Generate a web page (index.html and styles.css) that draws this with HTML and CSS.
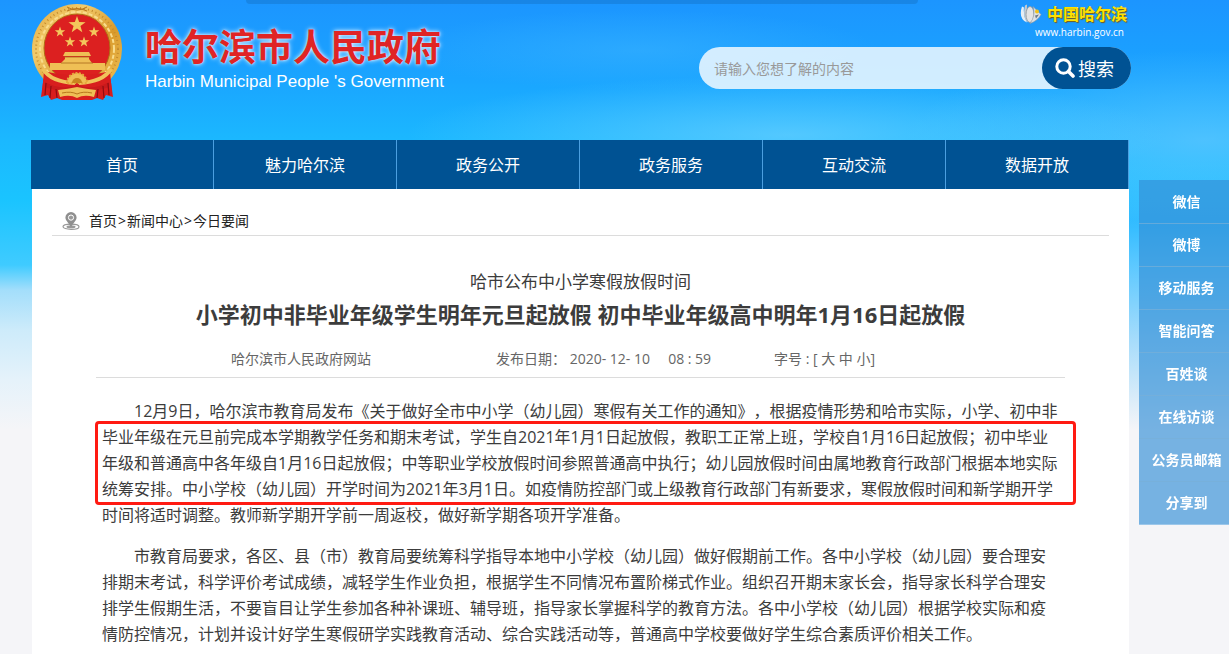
FILE: index.html
```
<!DOCTYPE html>
<html lang="zh-CN">
<head>
    <meta charset="UTF-8">
    <meta name="viewport" content="width=device-width, initial-scale=1.0">
    <title>哈尔滨市人民政府</title>
    <link rel="stylesheet" href="styles.css">
</head>
<body>
    <div class="top-tab"></div>

    <div class="page">
        <header class="header">
            <a class="brand" href="#">
                <svg class="emblem" viewBox="0 0 92 98" aria-hidden="true">
                    <defs>
                        <linearGradient id="gold" x1="0" y1="0" x2="1" y2="1">
                            <stop offset="0" stop-color="#e0a63a"/>
                            <stop offset="0.3" stop-color="#f2cb6c"/>
                            <stop offset="0.6" stop-color="#d99a2b"/>
                            <stop offset="1" stop-color="#f3c65c"/>
                        </linearGradient>
                        <polygon id="star" points="0,-10 2.4,-3.2 9.5,-3.1 3.8,1.2 5.9,8.1 0,4 -5.9,8.1 -3.8,1.2 -9.5,-3.1 -2.4,-3.2"/>
                    </defs>
                    <!-- Ribbons -->
                    <path d="M13 72 L10 94 L17 92 L20 97 L26 95 L31 97 L61 97 L66 95 L72 97 L75 92 L82 94 L79 72 Z" fill="#d81e1e"/>
                    <!-- Wreath -->
                    <circle cx="46" cy="46" r="45" fill="url(#gold)"/>
                    <circle cx="46" cy="46" r="41" fill="none" stroke="#c48a2c" stroke-width="2" stroke-dasharray="1 3"/>
                    <circle cx="46" cy="46" r="37" fill="none" stroke="#f9dc8c" stroke-width="2" stroke-dasharray="4 2"/>
                    <path d="M36 4 Q46 10 56 4 M36 8 Q46 3 56 8" fill="none" stroke="#b8761c"/>
                    <ellipse cx="46" cy="45" rx="33" ry="34" fill="#dc2020" stroke="#b06c16"/>
                    <!-- Stars -->
                    <g fill="#f3c75c">
                        <use href="#star" transform="translate(46 22) scale(0.9)"/>
                        <use href="#star" transform="translate(29 29) scale(0.55)"/>
                        <use href="#star" transform="translate(63 29) scale(0.55)"/>
                        <use href="#star" transform="translate(39 39) scale(0.55)"/>
                        <use href="#star" transform="translate(53 39) scale(0.55)"/>
                    </g>
                    <!-- Gate tower -->
                    <g fill="#efbf55">
                        <path d="M34 49 H58 L60 53 H32 Z"/>
                        <path d="M34 54 H58 V56 L61 60 H30 L34 56 Z"/>
                        <rect x="19" y="60" width="55" height="7"/>
                    </g>
                    <path d="M33 54 H59 M30 60 H62" stroke="#a8671a" stroke-width="0.8"/>
                    <!-- Drapery and gear -->
                    <path d="M13 68 Q27 72 46 72 Q65 72 79 68 L81 90 Q63 84 46 90 Q29 84 11 90 Z" fill="#d81e1e"/>
                    <path d="M12 66 Q20 79 44 80 M80 66 Q72 79 48 80" fill="none" stroke="#f0c25a" stroke-width="4"/>
                    <path d="M36 80 A10 10 0 0 1 56 80 Z" fill="#efbf55" stroke="#e5a93c" stroke-width="2" stroke-dasharray="2 1.5"/>
                    <path d="M41 80 A5 5 0 0 1 51 80 Z" fill="#c9861f"/>
                    <path d="M14 79 Q30 88 46 82 Q62 88 78 79 L78 84 Q62 90 46 87 Q30 90 14 84 Z" fill="#c91a1c"/>
                    <path d="M27 87 Q37 86 46 84 Q55 86 65 87 L63 94 Q53 91 46 95 Q39 91 29 94 Z" fill="#efbf55"/>
                    <path d="M31 90 Q40 88 46 91 Q52 88 61 90" fill="none" stroke="#b8761c"/>
                    <path d="M15 80 L14 92 M20 83 L19 95 M25 86 L26 95 M77 80 L78 92 M72 83 L73 95 M67 86 L66 95" stroke="#8f0d12" stroke-width="1.2"/>
                </svg>
                <span class="brand-text">
                    <span class="brand-name">哈尔滨市人民政府</span>
                    <span class="brand-en">Harbin Municipal People 's Government</span>
                </span>
            </a>

            <div class="header-side">
                <a class="portal" href="#">
                    <span class="portal-top">
                        <svg class="portal-icon" viewBox="0 0 22 21" aria-hidden="true">
                            <path d="M2 3 Q-2 15 7 19 Q3 12 4 4 Z" fill="#e6eef5"/>
                            <path d="M5 2 Q2 14 8 19 Q6 10 7 1 Z" fill="#c6ccd2"/>
                            <ellipse cx="10" cy="11" rx="4" ry="8" fill="#e4e4e4" stroke="#8d949b" stroke-width="0.8"/>
                            <path d="M13 3 Q16 6 21 11 Q18 17 10 20 Q16 12 13 3 Z" fill="#dde2e6" stroke="#8d949b" stroke-width="0.6"/>
                            <circle cx="17" cy="8" r="2" fill="#f2c218"/>
                            <path d="M15 12 L19 11 L16 15 Z" fill="#6e7880"/>
                        </svg>
                        <span class="portal-name">中国哈尔滨</span>
                    </span>
                    <span class="portal-url">www.harbin.gov.cn</span>
                </a>
                <form class="search">
                    <input class="search-input" type="text" placeholder="请输入您想了解的内容" aria-label="搜索内容">
                    <button class="search-btn" type="button">
                        <svg class="search-icon" viewBox="0 0 20 20" aria-hidden="true">
                            <circle cx="8.5" cy="8.5" r="6.7" fill="none" stroke="#fff" stroke-width="3"/>
                            <path d="M13.5 13.5 L18 18" stroke="#fff" stroke-width="3.6" stroke-linecap="round"/>
                        </svg>
                        搜索
                    </button>
                </form>
            </div>
        </header>

        <nav class="nav">
            <a href="#">首页</a>
            <a href="#">魅力哈尔滨</a>
            <a href="#">政务公开</a>
            <a href="#">政务服务</a>
            <a href="#">互动交流</a>
            <a href="#">数据开放</a>
        </nav>

        <main class="content">
            <div class="breadcrumb">
                <svg class="pin" viewBox="0 0 18 18" aria-hidden="true">
                    <ellipse cx="9" cy="14.7" rx="8" ry="2.6" fill="none" stroke="#999" stroke-width="1.2"/>
                    <ellipse cx="9" cy="14.7" rx="4.5" ry="1.5" fill="#999"/>
                    <path d="M9 0 A5.6 5.6 0 0 1 14.6 5.6 C14.6 9 10.5 11.5 9 15.5 C7.5 11.5 3.4 9 3.4 5.6 A5.6 5.6 0 0 1 9 0 Z" fill="#8f8f8f"/>
                    <circle cx="9" cy="5.6" r="2.6" fill="#999" stroke="#fff"/>
                </svg>
                <span><a href="#">首页</a><span class="sep">&gt;</span><a href="#">新闻中心</a><span class="sep">&gt;</span><a href="#">今日要闻</a></span>
            </div>

            <article class="article">
                <p class="subtitle">哈市公布中小学寒假放假时间</p>
                <h1 class="title">小学初中非毕业年级学生明年元旦起放假 初中毕业年级高中明年1月16日起放假</h1>
                <div class="meta">
                    <span>哈尔滨市人民政府网站</span>
                    <span>发布日期： 2020- 12- 10 &nbsp;&nbsp;&nbsp; 08 : 59</span>
                    <span>字号 : [ <a href="#">大</a> <a href="#">中</a> <a href="#">小</a>]</span>
                </div>
                <div class="text">
                    <p>12月9日，哈尔滨市教育局发布《关于做好全市中小学（幼儿园）寒假有关工作的通知》，根据疫情形势和哈市实际，小学、初中非毕业年级在元旦前完成本学期教学任务和期末考试，学生自2021年1月1日起放假，教职工正常上班，学校自1月16日起放假；初中毕业年级和普通高中各年级自1月16日起放假；中等职业学校放假时间参照普通高中执行；幼儿园放假时间由属地教育行政部门根据本地实际统筹安排。中小学校（幼儿园）开学时间为2021年3月1日。如疫情防控部门或上级教育行政部门有新要求，寒假放假时间和新学期开学时间将适时调整。教师新学期开学前一周返校，做好新学期各项开学准备。</p>
                    <p>市教育局要求，各区、县（市）教育局要统筹科学指导本地中小学校（幼儿园）做好假期前工作。各中小学校（幼儿园）要合理安排期末考试，科学评价考试成绩，减轻学生作业负担，根据学生不同情况布置阶梯式作业。组织召开期末家长会，指导家长科学合理安排学生假期生活，不要盲目让学生参加各种补课班、辅导班，指导家长掌握科学的教育方法。各中小学校（幼儿园）根据学校实际和疫情防控情况，计划并设计好学生寒假研学实践教育活动、综合实践活动等，普通高中学校要做好学生综合素质评价相关工作。</p>
                    <div class="highlight"></div>
                </div>
            </article>
        </main>
    </div>

    <aside class="side-menu">
        <a href="#">微信</a>
        <a href="#">微博</a>
        <a href="#">移动服务</a>
        <a href="#">智能问答</a>
        <a href="#">百姓谈</a>
        <a href="#">在线访谈</a>
        <a href="#">公务员邮箱</a>
        <a href="#">分享到</a>
    </aside>
</body>
</html>
```
FILE: styles.css
```
* {
    margin: 0;
    padding: 0;
    box-sizing: border-box;
}

body {
    min-height: 100vh;
    font-family: "Open Sans", "Noto Sans CJK SC", sans-serif;
    font-size: 14px;
    color: #3c3c3c;
    text-spacing-trim: space-all;
    background-color: #f5f5f8;
    /* Sky with a few light clouds, fading to grey */
    background-image:
        radial-gradient(ellipse 380px 60px at 64% 135px, rgba(120, 212, 255, 0.6), transparent),
        radial-gradient(ellipse 300px 90px at 98% 140px, rgba(110, 200, 255, 0.6), transparent),
        radial-gradient(ellipse 240px 40px at 52% 50px, rgba(60, 180, 255, 0.5), transparent),
        linear-gradient(transparent 160px, #2fbbff 220px, #5cc8ff 265px, #a6dcfb 340px, #f5f5f8 430px),
        linear-gradient(#1c95ff 0, #1aa5ff 80px, #1bb8ff 140px, #1ac4ff 200px, #3fcbff 265px, #a3defb 290px, #cdebfa 330px, #e5f2fa 380px, #f5f5f8 430px);
    background-repeat: no-repeat;
    background-position: 0 0, 0 0, 0 0, right top, 0 0;
    background-size: auto, auto, auto, 50% 100%, auto;
}

a {
    color: inherit;
    text-decoration: none;
}

.top-tab {
    position: absolute;
    top: 0;
    left: 20%;
    width: 672px;
    height: 4px;
    background-color: rgba(20, 110, 190, 0.4);
    border-radius: 0 0 6px 6px;
}

.page {
    display: flex;
    flex-direction: column;
    min-height: 100vh;
    padding: 0 100px 0 32px;
}

.header {
    display: flex;
    justify-content: space-between;
    align-items: flex-start;
    height: 140px;
    margin: 0 -2px 0 -1px;
}

.brand {
    display: flex;
    gap: 22px;
    padding-top: 3px;
}

.emblem {
    width: 92px;
    height: 98px;
}

.brand-text {
    display: flex;
    flex-direction: column;
    gap: 2px;
    padding-top: 21px;
}

.brand-name {
    font-size: 37px;
    line-height: 46px;
    font-weight: bold;
    color: #e02424;
    text-shadow: 0 0 2px rgba(255, 255, 255, 0.6), 0 0 5px #fff;
}

.brand-en {
    font-family: "Liberation Sans", Arial, sans-serif;
    font-size: 17px;
    line-height: 20px;
    color: #fff;
}

.header-side {
    display: flex;
    flex-direction: column;
    gap: 8px;
    width: 432px;
    padding-top: 3px;
}

.portal {
    display: flex;
    flex-direction: column;
    align-items: flex-end;
    padding-right: 4px;
}

.portal-top {
    display: flex;
    gap: 5px;
}

.portal-icon {
    width: 22px;
    height: 22px;
}

.portal-name {
    font-size: 16px;
    line-height: 22px;
    font-weight: bold;
    color: #ffe100;
    text-shadow: 1px 1px 1px #7a5a10;
}

.portal-url {
    padding-right: 3px;
    font-size: 10px;
    line-height: 14px;
    color: #fff;
}

.search {
    display: flex;
    height: 42px;
    background-color: rgba(255, 255, 255, 0.8);
    border-radius: 21px;
}

.search-input {
    flex: 1;
    min-width: 0;
    padding: 0 15px;
    border: none;
    outline: none;
    background: none;
    font-family: inherit;
    font-size: 14px;
    color: #3c3c3c;
}

.search-input::placeholder {
    color: #999;
}

.search-btn {
    display: flex;
    justify-content: center;
    align-items: center;
    gap: 3px;
    width: 89px;
    padding-right: 4px;
    border: none;
    border-radius: 21px;
    background-color: #005293;
    font-family: inherit;
    font-size: 18px;
    color: #fff;
    cursor: pointer;
}

.search-icon {
    width: 20px;
    height: 20px;
}

.nav {
    display: flex;
    margin-left: -1px;
    background-color: #005293;
}

.nav a {
    flex: 1;
    padding-top: 1px;
    line-height: 48px;
    border-right: 1px solid #4c9fe0;
    font-size: 16px;
    text-align: center;
    color: #fff;
}

.content {
    flex: 1;
    padding: 20px 20px 0;
    background-color: #fff;
}

.breadcrumb {
    display: flex;
    align-items: center;
    gap: 9px;
    padding: 0 10px 2px;
    border-bottom: 1px solid #dcdcdc;
    line-height: 24px;
    color: #222;
}

.sep {
    padding: 0 1px;
}

.pin {
    width: 18px;
    height: 18px;
}

.article {
    padding: 32px 44px 0;
}

.subtitle {
    font-size: 17px;
    line-height: 28px;
    text-align: center;
}

.title {
    font-size: 22px;
    line-height: 36px;
    text-align: center;
}

.meta {
    display: grid;
    grid-template-columns: 265px 278px 1fr;
    padding: 17px 0 8px 135px;
    border-bottom: 1px solid #dcdcdc;
    line-height: 20px;
    color: #666;
}

.text {
    position: relative;
    padding: 20px 5px 0 6px;
    font-size: 16px;
    line-height: 26px;
}

.text p {
    margin-bottom: 15px;
    text-indent: 2em;
}

.text p:last-of-type {
    margin-bottom: 0;
}

/* Red frame round the second to fourth lines */
.highlight {
    position: absolute;
    top: 43px;
    left: -1px;
    right: -11px;
    height: 84px;
    border: 3px solid #ff1a12;
    border-radius: 4px;
}

.side-menu {
    position: fixed;
    top: 180px;
    right: 0;
    width: 90px;
    padding-top: 1px;
    background-color: rgba(51, 143, 214, 0.66);
    border-bottom: 1px solid #9cc7ea;
}

.side-menu a {
    display: block;
    padding-left: 5px;
    line-height: 42px;
    border-bottom: 1px solid rgba(120, 175, 215, 0.7);
    font-weight: bold;
    text-align: center;
    color: #fff;
}

.side-menu a:last-child {
    border-bottom: none;
}
```
